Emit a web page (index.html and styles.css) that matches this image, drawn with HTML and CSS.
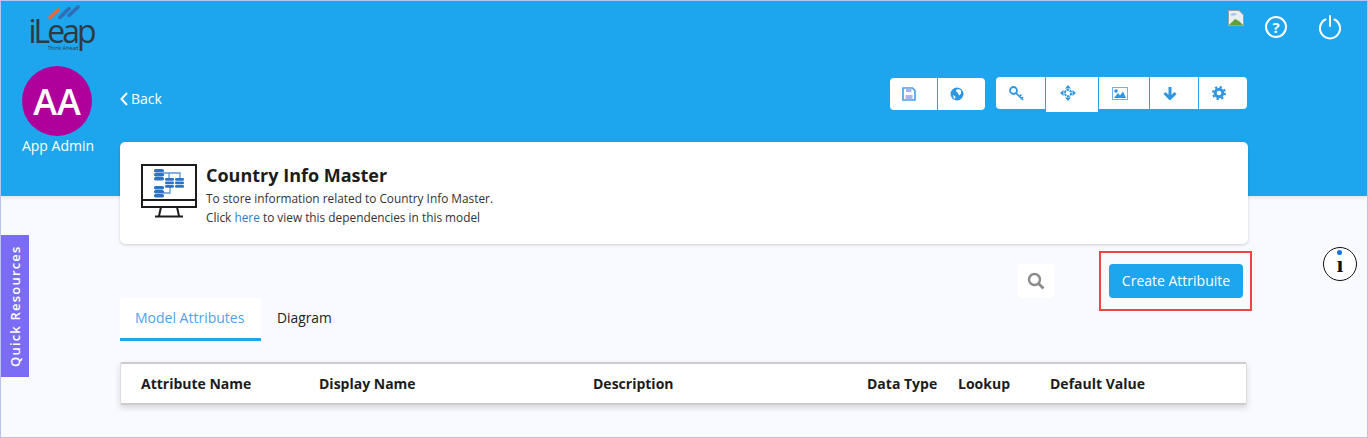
FILE: index.html
```html
<!DOCTYPE html>
<html lang="en">
<head>
<meta charset="utf-8">
<title>Country Info Master</title>
<link rel="stylesheet" href="styles.css">
</head>
<body>
<div class="frame">
  <header class="hero">
    <aside class="identity">
      <div class="logo">
        <svg class="logo-bars" width="34" height="14" viewBox="0 0 34 14"><path d="M2 12.500 L10 5" stroke="#e8683a" stroke-width="3.600" stroke-linecap="round"/><path d="M12 12.500 L21 3.500" stroke="#2f6fb5" stroke-width="3.600" stroke-linecap="round"/><path d="M21 10.500 L30 2" stroke="#2f6fb5" stroke-width="3.600" stroke-linecap="round"/></svg>
        <span class="logo-word">iLeap</span>
        <span class="logo-tag">Think Ahead</span>
      </div>
      <div class="avatar">AA</div>
      <div class="user-name">App Admin</div>
    </aside>
    <div class="hero-main">
      <div class="top-icons">
        <svg class="broken" width="16" height="16" viewBox="0 0 16 16"><path d="M0.500 0.500H11L15.500 5V15.500H0.500Z" fill="#e8eef2" stroke="#9aa0a4"/><path d="M2 5 Q5 1.500 9 4 Q6 7 2 5" fill="#a9c4ee"/><path d="M1 15 L7 9 L11 11 L15 15Z" fill="#5ea03a"/></svg>
        <svg class="round-icon" width="26" height="26" viewBox="0 0 26 26"><circle cx="13" cy="13" r="10" fill="none" stroke="#fff" stroke-width="2"/><text x="13" y="18.500" text-anchor="middle" class="q-mark">?</text></svg>
        <svg class="round-icon" width="26" height="26" viewBox="0 0 26 26"><path d="M8.500 5.500 A10 10 0 1 0 17.500 5.500" fill="none" stroke="#fff" stroke-width="2" stroke-linecap="round"/><path d="M13 2 V12" stroke="#fff" stroke-width="2" stroke-linecap="round"/></svg>
      </div>
      <div class="toolbar-row">
        <a class="back"><svg width="8" height="14" viewBox="0 0 8 14"><path d="M7 1 L1.500 7 L7 13" fill="none" stroke="#fff" stroke-width="2"/></svg>Back</a>
        <div class="tool-groups">
          <div class="tools tools-a">
            <button class="tool tool-save"><svg width="14" height="14" viewBox="0 0 14 14"><path d="M1 1H10.500L13 3.500V13H1Z" fill="none" stroke="#3f9fe8" stroke-width="1.600"/><path d="M4 1.500H9.500V5H4Z M3.500 8H10.500V12.500H3.500Z" fill="#a7b4f0"/></svg></button>
            <button class="tool tool-globe"><svg width="14" height="14" viewBox="0 0 14 14"><circle cx="7" cy="7" r="6.500" fill="#2f96e4"/><path d="M6 3 Q9 1.500 11 3.500 Q12 6 9.500 8.500 Q8 7 7.500 5.500 Q6 5 6 3Z M3 8 L5.500 9.500 L5 12 Q3 11 3 8Z" fill="#fff"/></svg></button>
          </div>
          <div class="tools tools-b">
            <button class="tool tool-w49"><svg width="15" height="15" viewBox="0 0 15 15"><circle cx="4.500" cy="4.500" r="3.500" fill="none" stroke="#2f96e4" stroke-width="1.800"/><path d="M7 7 L14 14 M10.500 10.500 L12.500 8.500 M12.500 12.500 L14 11" stroke="#2f96e4" stroke-width="1.700"/></svg></button>
            <button class="tool tool-active"><svg width="16" height="16" viewBox="0 0 16 16"><path d="M8 0 L11 3.500H5Z M8 16 L11 12.500H5Z M0 8 L3.500 5V11Z M16 8 L12.500 5V11Z" fill="#2f96e4"/><circle cx="8" cy="8" r="3.200" fill="none" stroke="#2f96e4" stroke-width="2" stroke-dasharray="2.500 .8"/></svg></button>
            <button class="tool tool-w50"><svg width="16" height="13" viewBox="0 0 16 13"><rect x="0.500" y="0.500" width="15" height="12" fill="none" stroke="#6eb4ee"/><circle cx="4" cy="4" r="1.800" fill="#2f96e4"/><path d="M2 11 L6 6 L8 8.500 L11 4.500 L14 11Z" fill="#2f96e4"/></svg></button>
            <button class="tool tool-w48"><svg width="14" height="14" viewBox="0 0 14 14"><path d="M7 1 V12 M1.500 7 L7 12.500 L12.500 7" fill="none" stroke="#2f96e4" stroke-width="3"/></svg></button>
            <button class="tool tool-w48"><svg width="14" height="14" viewBox="0 0 14 14"><circle cx="7" cy="7" r="3.800" fill="none" stroke="#2f96e4" stroke-width="3"/><circle cx="7" cy="7" r="6" fill="none" stroke="#2f96e4" stroke-width="2" stroke-dasharray="2.300 2.400"/></svg></button>
          </div>
        </div>
      </div>
      <section class="model-card">
        <svg class="monitor" width="56" height="54" viewBox="0 0 56 54">
          <path d="M1 1H55V43H1Z M1 36H55" fill="none" stroke="#1c1c1c" stroke-width="2"/>
          <path d="M20 43 L18 52 M36 43 L38 52 M14 52.500H42" fill="none" stroke="#1c1c1c" stroke-width="2"/>
          <path d="M22 9H39V15 M28 9V15 M22 29H29V22" fill="none" stroke="#5a94d6" stroke-width="1.300"/>
          <g fill="#2e72c4"><rect x="13" y="5" width="10" height="3.400" rx="1.600"/><rect x="13" y="9" width="10" height="3.400" rx="1.600"/><rect x="13" y="13" width="10" height="3.400" rx="1.600"/><rect x="13" y="22" width="10" height="3.400" rx="1.600"/><rect x="13" y="26" width="10" height="3.400" rx="1.600"/><rect x="13" y="30" width="10" height="3.400" rx="1.600"/><rect x="24" y="14" width="9" height="2.700" rx="1.200"/><rect x="24" y="17.500" width="9" height="2.700" rx="1.200"/><rect x="24" y="21" width="9" height="2.700" rx="1.200"/><rect x="34" y="14" width="9" height="2.700" rx="1.200"/><rect x="34" y="17.500" width="9" height="2.700" rx="1.200"/><rect x="34" y="21" width="9" height="2.700" rx="1.200"/></g>
        </svg>
        <div class="model-text">
          <h1>Country Info Master</h1>
          <p>To store information related to Country Info Master.</p>
          <p>Click <a class="here">here</a> to view this dependencies in this model</p>
        </div>
      </section>
    </div>
  </header>

  <main class="content">
    <div class="action-row">
      <span class="search-box"><svg width="18" height="18" viewBox="0 0 18 18"><circle cx="7.500" cy="7.500" r="5.500" fill="none" stroke="#8b8b8b" stroke-width="2.400"/><path d="M11.500 11.500 L16.500 16.500" stroke="#8b8b8b" stroke-width="2.800"/></svg></span>
      <span class="highlight"><button class="create">Create Attribuite</button></span>
    </div>
    <nav class="tabs">
      <span class="tab tab-active">Model Attributes</span>
      <span class="tab tab-plain">Diagram</span>
    </nav>
    <div class="table-head">
      <span class="col col-name">Attribute Name</span>
      <span class="col col-display">Display Name</span>
      <span class="col col-desc">Description</span>
      <span class="col col-type">Data Type</span>
      <span class="col col-lookup">Lookup</span>
      <span class="col">Default Value</span>
    </div>
  </main>

  <div class="quick">Quick Resources</div>
  <div class="info"><span class="info-dot"></span><span class="info-i">ı</span></div>
</div>
</body>
</html>
```
FILE: styles.css
```css
* { box-sizing: border-box; }
html, body { margin: 0; padding: 0; }
body { font-family: "Open Sans", "Noto Sans", sans-serif; background: #f8faff; color: #1c1c1c; }
.frame { position: relative; width: 1368px; height: 438px; overflow: hidden; border: 1px solid #b9c4f5; background: #f8faff; }
.hero { height: 195px; background: #1da6ee; display: flex; box-shadow: 0 1px 4px rgba(0,0,0,.12); }
.identity { width: 119px; flex: none; display: flex; flex-direction: column; align-items: center; padding-right: 7px; }
.logo { width: 70px; height: 65px; flex: none; align-self: flex-start; margin-left: 25px; display: flex; flex-direction: column; align-items: center; color: #2f3a45; }
.logo-bars { flex: none; margin-top: 4px; margin-left: 8px; }
.logo-word { font-family: "Open Sans", sans-serif; font-size: 32px; font-weight: 500; line-height: 26px; letter-spacing: -3px; margin-top: -1px; color: #2d3a46; }
.logo-tag { font-size: 5.300px; line-height: 6px; color: #2d3a46; margin-top: 1px; margin-left: 4px; }
.avatar { width: 70px; height: 70px; flex: none; border-radius: 50%; background: #b0009c; color: #fff; font-size: 36px; font-weight: 600; display: flex; align-items: center; justify-content: center; }
.user-name { color: #fff; font-size: 14px; line-height: 19px; margin-left: 2px; white-space: nowrap; }
.hero-main { width: 1128px; flex: none; display: flex; flex-direction: column; }
.hero-main > * { flex: none; }
.top-icons { height: 76px; display: flex; align-items: flex-start; justify-content: flex-end; margin-right: -109px; padding-top: 13px; }
.broken { margin-top: -4px; margin-right: 19px; }
.round-icon + .round-icon { margin-left: 28px; margin-right: 14px; }
.q-mark { font-family: "Open Sans", sans-serif; font-size: 15px; font-weight: 700; fill: #fff; }
.toolbar-row { height: 65px; display: flex; justify-content: space-between; align-items: flex-start; }
.back { color: #fff; font-size: 14px; line-height: 19px; display: flex; align-items: center; gap: 3px; margin-top: 12px; }
.tool-groups { display: flex; gap: 11px; margin-right: 1px; }
.tools { display: flex; align-items: flex-start; gap: 1px; }
.tool { height: 32px; width: 47px; background: #fff; border: 0; padding: 0 9px 0 0; display: flex; align-items: center; justify-content: center; }
.tools-a .tool-save { border-radius: 4px 0 0 4px; }
.tools-a .tool-globe { border-radius: 0 4px 4px 0; }
.tools-a { margin-top: 1px; }
.tools-b .tool:first-child { border-radius: 4px 0 0 4px; width: 49px; }
.tools-b .tool:last-child { border-radius: 0 4px 4px 0; }
.tool-active { height: 35px; width: 52px; padding-bottom: 3px; }
.tool-w50 { width: 50px; }
.tool-w48 { width: 48px; }
.model-card { height: 102px; background: #fff; border-radius: 5px; box-shadow: 0 1px 3px rgba(0,0,0,.18); display: flex; align-items: center; padding: 0 21px; gap: 9px; }
.monitor { flex: none; margin-top: -4px; }
.model-text { padding-top: 4px; }
.model-text h1 { margin: 0 0 1px; font-size: 18px; font-weight: 700; line-height: 25px; color: #1c1c1c; }
.model-text p { margin: 0; font-size: 11.850px; line-height: 19px; color: #333; }
.here { color: #2a7fd0; }
.content { padding: 48px 120px 0 119px; }
.action-row { display: flex; justify-content: flex-end; align-items: center; height: 60px; margin-top: 7px; margin-right: -5px; }
.search-box { width: 36px; height: 34px; background: #fff; border-radius: 4px; display: flex; align-items: center; justify-content: center; margin-right: 45px; }
.highlight { border: 2px solid #f04343; width: 153px; height: 60px; display: flex; align-items: center; justify-content: center; }
.create { width: 134px; height: 34px; background: #1da6ee; color: #fff; border: 0; border-radius: 4px; font: 14px "Open Sans", sans-serif; padding: 0 0 2px 1px; }
.tabs { display: flex; margin-top: -13px; }
.tab { font-size: 14px; line-height: 19px; padding: 10px 16px 12px; color: #222; }
.tab-plain { font-size: 13.800px; }
.tab-active { color: #4da3f0; width: 141px; background: #fff; border-radius: 4px 4px 0 0; border-bottom: 3px solid #1da6ee; padding: 10px 15px 11px; }
.table-head { margin-top: 21px; height: 43px; background: #fff; border-top: 2px solid #ccc; border-bottom: 2px solid #ccc; border-right: 1px solid #ddd; border-left: 1px solid #ddd; border-radius: 2px; box-shadow: 0 3px 6px rgba(0,0,0,.14); display: flex; align-items: center; padding-left: 20px; font-size: 14px; font-weight: 700; white-space: nowrap; }
.col-name { width: 178px; }
.col-display { width: 274px; }
.col-desc { width: 274px; }
.col-type { width: 91px; }
.col-lookup { width: 92px; }
.quick { position: absolute; left: 0; top: 234px; width: 28px; height: 142px; background: #7b6cf6; color: #fff; writing-mode: vertical-rl; transform: rotate(180deg); display: flex; align-items: center; justify-content: center; font-size: 13px; font-weight: 600; letter-spacing: 1.200px; }
.info { position: absolute; left: 1322px; top: 246px; width: 34px; height: 34px; border: 1px solid #111; border-radius: 50%; background: #fff; display: flex; align-items: center; justify-content: center; }
.info-dot { position: absolute; left: 13px; top: 2px; width: 5px; height: 5px; border-radius: 50%; background: #1272e8; }
.info-i { font-family: "Liberation Serif", serif; font-weight: 700; font-size: 23px; line-height: 20px; margin-top: 2px; color: #111; }
```
